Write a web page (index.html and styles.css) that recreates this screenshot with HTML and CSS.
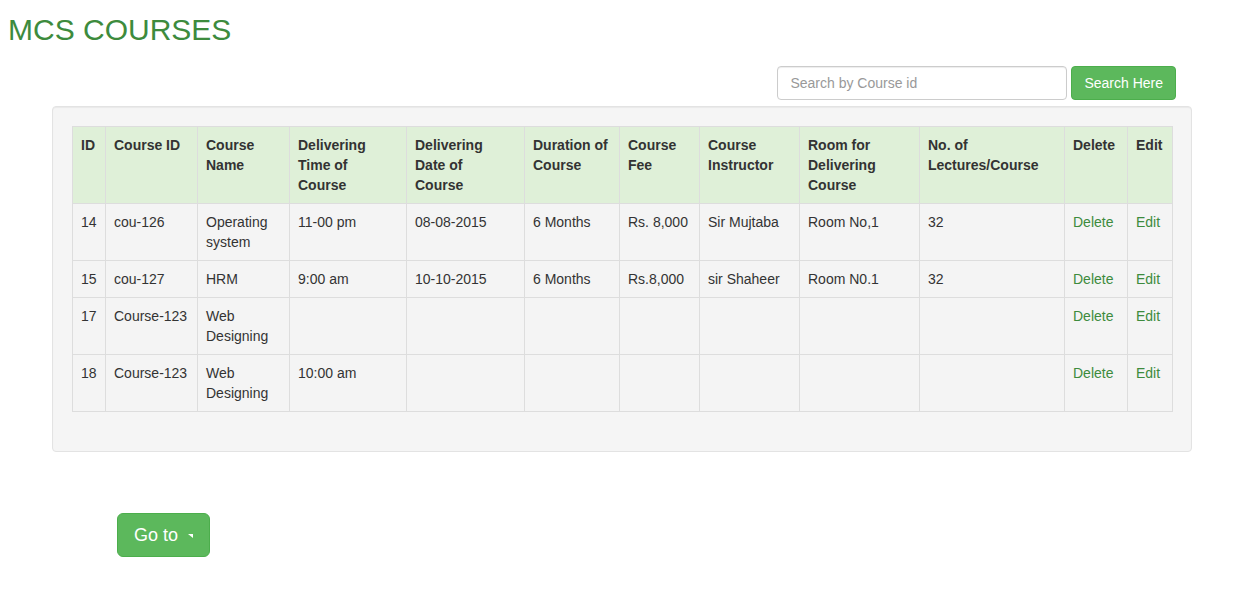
FILE: index.html
```html
<!DOCTYPE html>
<html>
<head>
<meta charset="utf-8">
<title>MCS Courses</title>
<link rel="stylesheet" href="styles.css">
</head>
<body>
<h2 class="title">MCS COURSES</h2>
<form class="search">
  <input class="search-input" type="text" placeholder="Search by Course id">
  <button class="btn btn-success" type="button">Search Here</button>
</form>
<div class="well">
  <table class="table">
    <colgroup>
      <col style="width:33px"><col style="width:92px"><col style="width:92px"><col style="width:117px"><col style="width:118px"><col style="width:95px"><col style="width:80px"><col style="width:100px"><col style="width:120px"><col style="width:145px"><col style="width:63px"><col style="width:45px">
    </colgroup>
    <thead>
      <tr>
        <th>ID</th><th>Course ID</th><th>Course Name</th><th>Delivering Time of Course</th><th>Delivering Date of<br>Course</th><th>Duration of Course</th><th>Course Fee</th><th>Course Instructor</th><th>Room for Delivering Course</th><th>No. of Lectures/Course</th><th>Delete</th><th>Edit</th>
      </tr>
    </thead>
    <tbody>
      <tr>
        <td>14</td><td>cou-126</td><td>Operating system</td><td>11-00 pm</td><td>08-08-2015</td><td>6 Months</td><td>Rs. 8,000</td><td>Sir Mujtaba</td><td>Room No,1</td><td>32</td><td><a href="#">Delete</a></td><td><a href="#">Edit</a></td>
      </tr>
      <tr>
        <td>15</td><td>cou-127</td><td>HRM</td><td>9:00 am</td><td>10-10-2015</td><td>6 Months</td><td>Rs.8,000</td><td>sir Shaheer</td><td>Room N0.1</td><td>32</td><td><a href="#">Delete</a></td><td><a href="#">Edit</a></td>
      </tr>
      <tr>
        <td>17</td><td>Course-123</td><td>Web Designing</td><td></td><td></td><td></td><td></td><td></td><td></td><td></td><td><a href="#">Delete</a></td><td><a href="#">Edit</a></td>
      </tr>
      <tr>
        <td>18</td><td>Course-123</td><td>Web Designing</td><td>10:00 am</td><td></td><td></td><td></td><td></td><td></td><td></td><td><a href="#">Delete</a></td><td><a href="#">Edit</a></td>
      </tr>
    </tbody>
  </table>
</div>
<div class="goto">
  <button class="btn btn-success btn-lg" type="button">Go to <span class="caret"></span></button>
</div>
</body>
</html>
```

FILE: styles.css
```css
* { box-sizing: border-box; }
html, body { margin: 0; padding: 0; }
body {
  font-family: "Liberation Sans", Arial, Helvetica, sans-serif;
  font-size: 14px;
  line-height: 20px;
  color: #333;
  background: #fff;
}
.title {
  margin: 13px 0 0 8px;
  font-size: 30px;
  line-height: 33px;
  font-weight: normal;
  color: #3d8b3d;
}
.search {
  display: flex;
  justify-content: flex-end;
  align-items: center;
  gap: 4px;
  margin: 20px 57px 0 0;
}
.search-input {
  width: 290px;
  height: 34px;
  padding: 6px 12px;
  font-family: inherit;
  font-size: 14px;
  color: #555;
  border: 1px solid #ccc;
  border-radius: 4px;
  box-shadow: inset 0 1px 1px rgba(0,0,0,.075);
  outline: none;
}
.search-input::placeholder { color: #999; }
.btn {
  font-family: inherit;
  font-size: 14px;
  line-height: 20px;
  padding: 6px 12px;
  height: 34px;
  border-radius: 4px;
  border: 1px solid transparent;
  cursor: pointer;
}
.btn-success {
  color: #fff;
  background: #5cb85c;
  border-color: #4cae4c;
}
.well {
  margin: 6px 41px 0 52px;
  padding: 19px;
  background: #f5f5f5;
  border: 1px solid #e3e3e3;
  border-radius: 4px;
  box-shadow: inset 0 1px 1px rgba(0,0,0,.05);
}
.table {
  width: 1100px;
  table-layout: fixed;
  border-collapse: collapse;
  margin-bottom: 20px;
}
.table th, .table td {
  border: 1px solid #ddd;
  padding: 8px;
  vertical-align: top;
  text-align: left;
  line-height: 20px;
}
.table thead th {
  background: #dff0d8;
  font-weight: bold;
}
.table tbody td { background: #f4f4f4; }
.table a {
  color: #3d8b3d;
  text-decoration: none;
}
.goto {
  margin: 61px 0 0 117px;
}
.btn-lg {
  font-size: 18px;
  line-height: 24px;
  height: 44px;
  padding: 9px 16px;
  border-radius: 6px;
  display: inline-flex;
  align-items: center;
  gap: 10px;
}
.caret {
  display: inline-block;
  width: 0;
  height: 0;
  border-top: 4px solid #fff;
  border-left: 5px solid transparent;
  margin-top: 1px;
}
```
